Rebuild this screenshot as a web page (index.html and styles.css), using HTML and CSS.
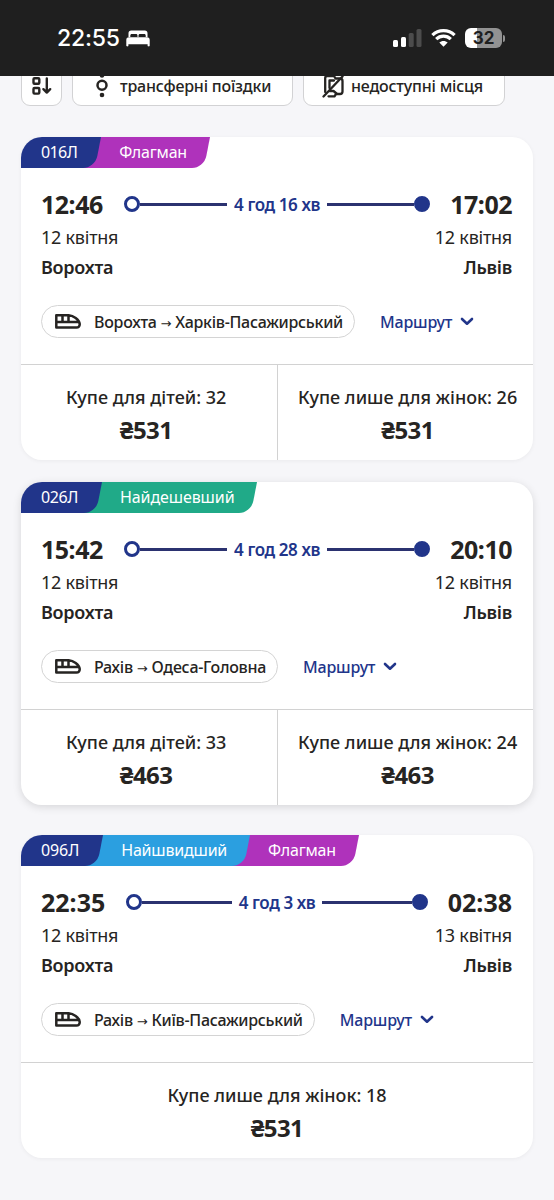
FILE: index.html
```html
<!DOCTYPE html>
<html lang="uk">
<head>
  <meta charset="UTF-8">
  <meta name="viewport" content="width=device-width, initial-scale=1.0">
  <title>Поїзди Ворохта – Львів</title>
  <link rel="stylesheet" href="styles.css">
</head>
<body>
  <svg class="symbols" width="0" height="0">
    <symbol id="train" viewBox="0 0 26 15">
      <path d="M1.3 1.2H12.5C18.5 1.2 24.3 5.6 24.7 9.8C24.9 12.3 23.4 13.6 21.5 13.6H1.3Z M1.3 8H24 M7.5 1.2V8 M13.5 1.2V8" fill="none" stroke="#262422" stroke-width="2.5" stroke-linejoin="round"/>
    </symbol>
    <symbol id="chevron" viewBox="0 0 14 9">
      <path d="M2 2L7 6.7L12 2" fill="none" stroke="#21358a" stroke-width="2.6" stroke-linecap="round" stroke-linejoin="round"/>
    </symbol>
  </svg>

  <!-- Status bar -->
  <div class="status">
    <span class="clock">22:55</span>
    <svg class="bed" width="24" height="17" viewBox="0 0 24 17">
      <path d="M2.5 7V3.2C2.5 1.4 3.5.5 5.2.5H18.8C20.5.5 21.5 1.4 21.5 3.2V7H19.7V5.6C19.7 4.6 19.2 4 18.2 4H14C13 4 12.5 4.6 12.5 5.6V7H11.5V5.6C11.5 4.6 11 4 10 4H5.8C4.8 4 4.3 4.6 4.3 5.6V7Z" fill="#fff"/>
      <path d="M3 7.3H21C22.8 7.3 23.7 8.4 23.7 10V15.6C23.7 16.8 21.6 16.8 21.6 15.6V14.2H2.4V15.6C2.4 16.8.3 16.8.3 15.6V10C.3 8.4 1.2 7.3 3 7.3Z" fill="#fff"/>
    </svg>
    <svg class="signal" width="29" height="18" viewBox="0 0 29 18">
      <rect x="0" y="11" width="5" height="7" rx="1.5" fill="#fff"/>
      <rect x="8" y="8" width="5" height="10" rx="1.5" fill="#fff"/>
      <rect x="15.7" y="4" width="5" height="14" rx="1.5" fill="#4c4c4c"/>
      <rect x="23.5" y="0" width="5" height="18" rx="1.5" fill="#4c4c4c"/>
    </svg>
    <svg class="wifi" width="25" height="18" viewBox="0 0 25 18">
      <path d="M1.4 6.2C7.5.1 17.5.1 23.6 6.2M5.2 10.2C9.3 6.2 15.7 6.2 19.8 10.2" fill="none" stroke="#fff" stroke-width="3.2"/>
      <path d="M12.5 17.8L8.3 13.6C10.5 11.3 14.5 11.3 16.7 13.6Z" fill="#fff"/>
    </svg>
    <div class="battery">32</div>
  </div>

  <!-- Filters -->
  <div class="filters">
    <div class="filter filter-sort">
      <svg width="20" height="18" viewBox="0 0 20 18" fill="none" stroke="#262422" stroke-width="2.4" stroke-linejoin="round">
        <rect x="1.5" y="1.2" width="5.8" height="5.6" rx="1"/>
        <rect x="1.5" y="11" width="5.8" height="5.6" rx="1"/>
        <path d="M14.8 1.5V15.5M11.4 12.2L14.8 15.6L18.2 12.2" stroke-linecap="round"/>
      </svg>
    </div>
    <div class="filter filter-transfer">
      <svg width="12" height="25" viewBox="0 0 12 25">
        <circle cx="6" cy="2.5" r="2.3" fill="#262422"/>
        <circle cx="6" cy="12.3" r="4.5" fill="none" stroke="#262422" stroke-width="2.5"/>
        <circle cx="6" cy="22" r="2.3" fill="#262422"/>
      </svg>
      <span>трансферні поїздки</span>
    </div>
    <div class="filter filter-seats">
      <svg width="22" height="24" viewBox="0 0 22 24" fill="none" stroke="#262422" stroke-width="2.3" stroke-linecap="round" stroke-linejoin="round">
        <path d="M3.2 18V4C3.2 2.8 4 2 5.2 2H12L13.5 4.5H18C19.5 4.5 20.5 5.5 20.5 7V17.5C20.5 19 19.5 20 18 20H14L12.5 22.3H6.5"/>
        <path d="M7.5 14V6.5H12M7.5 17H11.5L14.5 19.5"/>
        <path d="M1.5 22.5L20.5 2.5"/>
      </svg>
      <span>недоступні місця</span>
    </div>
  </div>

  <!-- Trips -->
  <div class="trips">
    <div class="card">
      <div class="tags">
        <div class="tag number"><span>016Л</span></div>
        <div class="tag flagship"><span>Флагман</span></div>
      </div>
      <div class="info">
        <div class="times">
          <span class="time">12:46</span>
          <div class="way">
            <i class="ring"></i><i class="line"></i>
            <span class="duration">4 год 16 хв</span>
            <i class="line"></i><i class="dot"></i>
          </div>
          <span class="time">17:02</span>
        </div>
        <div class="dates"><span>12 квітня</span><span>12 квітня</span></div>
        <div class="cities"><span>Ворохта</span><span>Львів</span></div>
        <div class="route">
          <div class="train"><svg width="26" height="15"><use href="#train"/></svg><span>Ворохта <b class="arrow">→</b> Харків-Пасажирський</span></div>
          <a class="more">Маршрут</a><svg width="14" height="9"><use href="#chevron"/></svg>
        </div>
      </div>
      <div class="prices">
        <div class="price"><span class="seat">Купе для дітей: 32</span><span class="sum">₴531</span></div>
        <div class="price"><span class="seat">Купе лише для жінок: 26</span><span class="sum">₴531</span></div>
      </div>
    </div>

    <div class="card raised">
      <div class="tags">
        <div class="tag number"><span>026Л</span></div>
        <div class="tag cheapest"><span>Найдешевший</span></div>
      </div>
      <div class="info">
        <div class="times">
          <span class="time">15:42</span>
          <div class="way">
            <i class="ring"></i><i class="line"></i>
            <span class="duration">4 год 28 хв</span>
            <i class="line"></i><i class="dot"></i>
          </div>
          <span class="time">20:10</span>
        </div>
        <div class="dates"><span>12 квітня</span><span>12 квітня</span></div>
        <div class="cities"><span>Ворохта</span><span>Львів</span></div>
        <div class="route">
          <div class="train"><svg width="26" height="15"><use href="#train"/></svg><span>Рахів <b class="arrow">→</b> Одеса-Головна</span></div>
          <a class="more">Маршрут</a><svg width="14" height="9"><use href="#chevron"/></svg>
        </div>
      </div>
      <div class="prices">
        <div class="price"><span class="seat">Купе для дітей: 33</span><span class="sum">₴463</span></div>
        <div class="price"><span class="seat">Купе лише для жінок: 24</span><span class="sum">₴463</span></div>
      </div>
    </div>

    <div class="card">
      <div class="tags">
        <div class="tag number wide"><span>096Л</span></div>
        <div class="tag fastest"><span>Найшвидший</span></div>
        <div class="tag flagship"><span>Флагман</span></div>
      </div>
      <div class="info">
        <div class="times">
          <span class="time wide">22:35</span>
          <div class="way">
            <i class="ring"></i><i class="line"></i>
            <span class="duration">4 год 3 хв</span>
            <i class="line"></i><i class="dot"></i>
          </div>
          <span class="time wide">02:38</span>
        </div>
        <div class="dates"><span>12 квітня</span><span>13 квітня</span></div>
        <div class="cities"><span>Ворохта</span><span>Львів</span></div>
        <div class="route">
          <div class="train"><svg width="26" height="15"><use href="#train"/></svg><span>Рахів <b class="arrow">→</b> Київ-Пасажирський</span></div>
          <a class="more">Маршрут</a><svg width="14" height="9"><use href="#chevron"/></svg>
        </div>
      </div>
      <div class="prices">
        <div class="price"><span class="seat">Купе лише для жінок: 18</span><span class="sum">₴531</span></div>
      </div>
    </div>
  </div>
</body>
</html>
```
FILE: styles.css
```css
* {
  box-sizing: border-box;
}

body {
  font-family: "Noto Sans", sans-serif;
  background-color: #f6f6f9;
  color: #262422;
  margin: 0;
  height: 1200px;
  overflow: hidden;
  white-space: nowrap;
}

.symbols {
  display: block;
}

svg {
  flex: none;
}

/* status bar */
.status {
  height: 76px;
  background-color: #1f1f1f;
  color: white;
  display: flex;
  align-items: center;
  padding: 0 52px 0 57px;
}

.clock {
  font-family: Inter, sans-serif;
  font-size: 23px;
  font-weight: 500;
  width: 69px;
  letter-spacing: -0.2px;
}

.signal {
  margin-left: auto;
}

.wifi {
  margin: 0 9px 0 9px;
}

.battery {
  position: relative;
  width: 37px;
  height: 20px;
  border-radius: 6px;
  background: linear-gradient(to right, #fff 12px, #929292 12px);
  color: #1f1f1f;
  font: bold 17px/20px Inter, sans-serif;
  text-align: center;
}

.battery::after {
  content: "";
  position: absolute;
  right: -3px;
  top: 7px;
  width: 2px;
  height: 7px;
  border-radius: 0 2px 2px 0;
  background-color: #929292;
}

/* filters, partly scrolled under the status bar */
.filters {
  display: flex;
  align-items: flex-end;
  gap: 10px;
  height: 30px;
  padding-left: 21px;
  overflow: hidden;
}

.filter {
  height: 41px;
  background-color: white;
  border: 1px solid #d2d2d4;
  border-radius: 9px;
  display: flex;
  align-items: center;
  font-size: 16px;
  font-weight: 500;
  letter-spacing: -0.2px;
}

.filter-sort {
  width: 41px;
  justify-content: center;
}

.filter-transfer {
  width: 221px;
  gap: 12px;
  padding-left: 23px;
}

.filter-seats {
  width: 202px;
  gap: 7px;
  padding-left: 18px;
}

/* trip cards */
.trips {
  padding: 31px 21px 0;
}

.card {
  background-color: white;
  border-radius: 21px;
  height: 323px;
  margin-bottom: 22px;
  box-shadow: 0 1px 4px rgba(0, 0, 0, 0.05);
  overflow: hidden;
}

.raised {
  margin-bottom: 30px;
  box-shadow: 0 2px 9px rgba(0, 0, 0, 0.13);
}

.tags {
  display: flex;
  height: 31px;
}

.tag {
  position: relative;
  color: white;
  font-size: 16px;
  line-height: 31px;
  letter-spacing: -0.2px;
  padding: 0 20px;
  margin-right: 1px;
  z-index: 1;
}

.tag::before {
  content: "";
  position: absolute;
  inset: 0 0 0 -30px;
  transform: skewX(-11deg);
  border-bottom-right-radius: 12px;
  z-index: -1;
}

.number {
  letter-spacing: -0.6px;
  padding-right: 21px;
  z-index: 3;
}

.raised .number {
  letter-spacing: -0.4px;
}

.number.wide {
  letter-spacing: -0.1px;
}

.number::before {
  background-color: #21358a;
}

.flagship::before {
  background-color: #af32bb;
}

.cheapest {
  letter-spacing: -0.1px;
}

.cheapest::before {
  background-color: #20aa88;
}

.fastest {
  z-index: 2;
}

.fastest::before {
  background-color: #2b9fe0;
}

.info {
  height: 196px;
  padding: 18px 21px 0 20px;
}

.times {
  display: flex;
  align-items: center;
  height: 36px;
  gap: 20px;
}

.time {
  font-size: 25px;
  font-weight: 700;
  letter-spacing: -0.5px;
}

.time.wide {
  letter-spacing: 0;
}

.way {
  flex: 1;
  display: flex;
  align-items: center;
  padding-left: 1px;
}

.ring,
.dot {
  width: 16px;
  height: 16px;
  border: 3px solid #21358a;
  border-radius: 50%;
}

.dot {
  background-color: #21358a;
}

.line {
  flex: 1;
  height: 3px;
  background-color: #2b3270;
}

.duration {
  color: #21358a;
  font-size: 17px;
  font-weight: 600;
  letter-spacing: -0.4px;
  padding: 0 7px;
}

.dates,
.cities {
  display: flex;
  justify-content: space-between;
  font-size: 18px;
  line-height: 30px;
  letter-spacing: -0.25px;
}

.cities {
  font-weight: 600;
}

.route {
  display: flex;
  align-items: center;
  height: 33px;
  margin-top: 23px;
}

.train {
  display: flex;
  align-items: center;
  gap: 13px;
  height: 33px;
  border: 1px solid #d4d4d4;
  border-radius: 17px;
  padding: 0 11px 0 13px;
  margin-right: 25px;
  font-size: 16px;
  font-weight: 500;
  letter-spacing: -0.27px;
}

.arrow {
  font: 13px "DejaVu Sans", sans-serif;
  letter-spacing: 0;
}

.more {
  color: #21358a;
  font-size: 16px;
  font-weight: 500;
  letter-spacing: -0.2px;
  margin-right: 8px;
}

.prices {
  display: flex;
  height: 96px;
  border-top: 1px solid #d2d2d2;
}

.price {
  width: 100%;
  display: flex;
  flex-direction: column;
  align-items: center;
  padding-top: 17px;
}

/* two offers side by side */
.price:not(:last-child) {
  padding-right: 6px;
}

.price + .price {
  border-left: 1px solid #d2d2d2;
  padding-left: 4px;
}

.seat {
  font-size: 18px;
  font-weight: 500;
  line-height: 30px;
}

.sum {
  font-size: 24px;
  font-weight: 700;
  line-height: 35px;
  letter-spacing: -0.6px;
}
```
